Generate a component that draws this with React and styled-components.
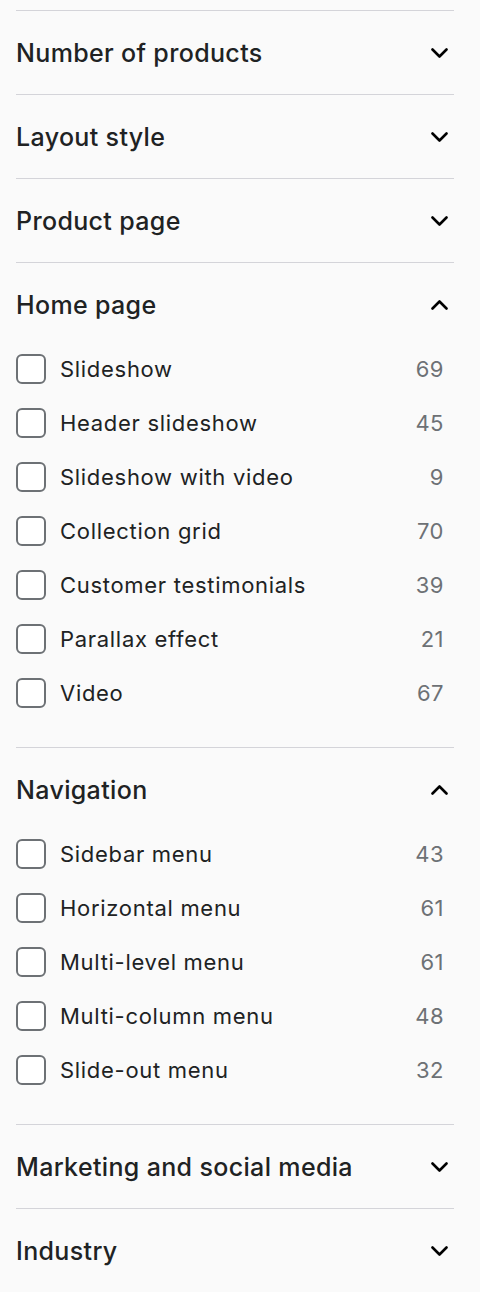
import React from "react"
import styled, { createGlobalStyle } from "styled-components"

const GlobalStyle = createGlobalStyle`
  body {
    margin: 0;
    background: #fafafa;
    font-family: Inter, "Noto Sans", sans-serif;
    color: #202223;
  }
`

const Panel = styled.div`
  padding: 10px 26px 0 16px;
`

const Section = styled.section`
  border-top: 1px solid #d4d4d9;
`

const Header = styled.div`
  height: 83px;
  display: flex;
  align-items: center;
  justify-content: space-between;
  padding-right: 6px;
  cursor: pointer;
`

const Title = styled.h3`
  margin: 0;
  font-size: 25px;
  font-weight: 500;
  letter-spacing: 0.35px;
  color: #202223;
`

const Chevron = styled.svg`
  width: 17px;
  height: 10px;
  transform: ${props => (props.open ? "rotate(180deg)" : "none")};
`

const List = styled.ul`
  list-style: none;
  margin: 0;
  padding: 8px 0 39px;
  display: flex;
  flex-direction: column;
  gap: 24px;
`

const Row = styled.li`
  height: 30px;
  display: flex;
  align-items: center;
  padding-right: 10px;
`

const Box = styled.span`
  box-sizing: border-box;
  width: 30px;
  height: 30px;
  border: 2px solid #6d7175;
  border-radius: 6px;
  background: #fff;
  flex-shrink: 0;
`

const Label = styled.span`
  margin-left: 14px;
  flex: 1;
  font-size: 22px;
  letter-spacing: 0.7px;
  color: #202223;
`

const Count = styled.span`
  font-size: 22px;
  letter-spacing: 0.5px;
  color: #6d7175;
`

const sections = [
  { title: "Number of products" },
  { title: "Layout style" },
  { title: "Product page" },
  {
    title: "Home page",
    items: [
      ["Slideshow", 69],
      ["Header slideshow", 45],
      ["Slideshow with video", 9],
      ["Collection grid", 70],
      ["Customer testimonials", 39],
      ["Parallax effect", 21],
      ["Video", 67],
    ],
  },
  {
    title: "Navigation",
    items: [
      ["Sidebar menu", 43],
      ["Horizontal menu", 61],
      ["Multi-level menu", 61],
      ["Multi-column menu", 48],
      ["Slide-out menu", 32],
    ],
  },
  { title: "Marketing and social media" },
  { title: "Industry" },
]

const FilterSection = ({ title, items }) => {
  const open = Boolean(items)
  return (
    <Section>
      <Header>
        <Title>{title}</Title>
        <Chevron open={open} viewBox="0 0 17 10" fill="none">
          <path
            d="M1.5 1.5L8.5 8.5L15.5 1.5"
            stroke="#000"
            strokeWidth="2.6"
            strokeLinecap="round"
            strokeLinejoin="round"
          />
        </Chevron>
      </Header>
      {open && (
        <List>
          {items.map(([label, count]) => (
            <Row key={label}>
              <Box />
              <Label>{label}</Label>
              <Count>{count}</Count>
            </Row>
          ))}
        </List>
      )}
    </Section>
  )
}

const App = () => (
  <>
    <GlobalStyle />
    <Panel>
      {sections.map(s => (
        <FilterSection key={s.title} {...s} />
      ))}
    </Panel>
  </>
)

export default App
